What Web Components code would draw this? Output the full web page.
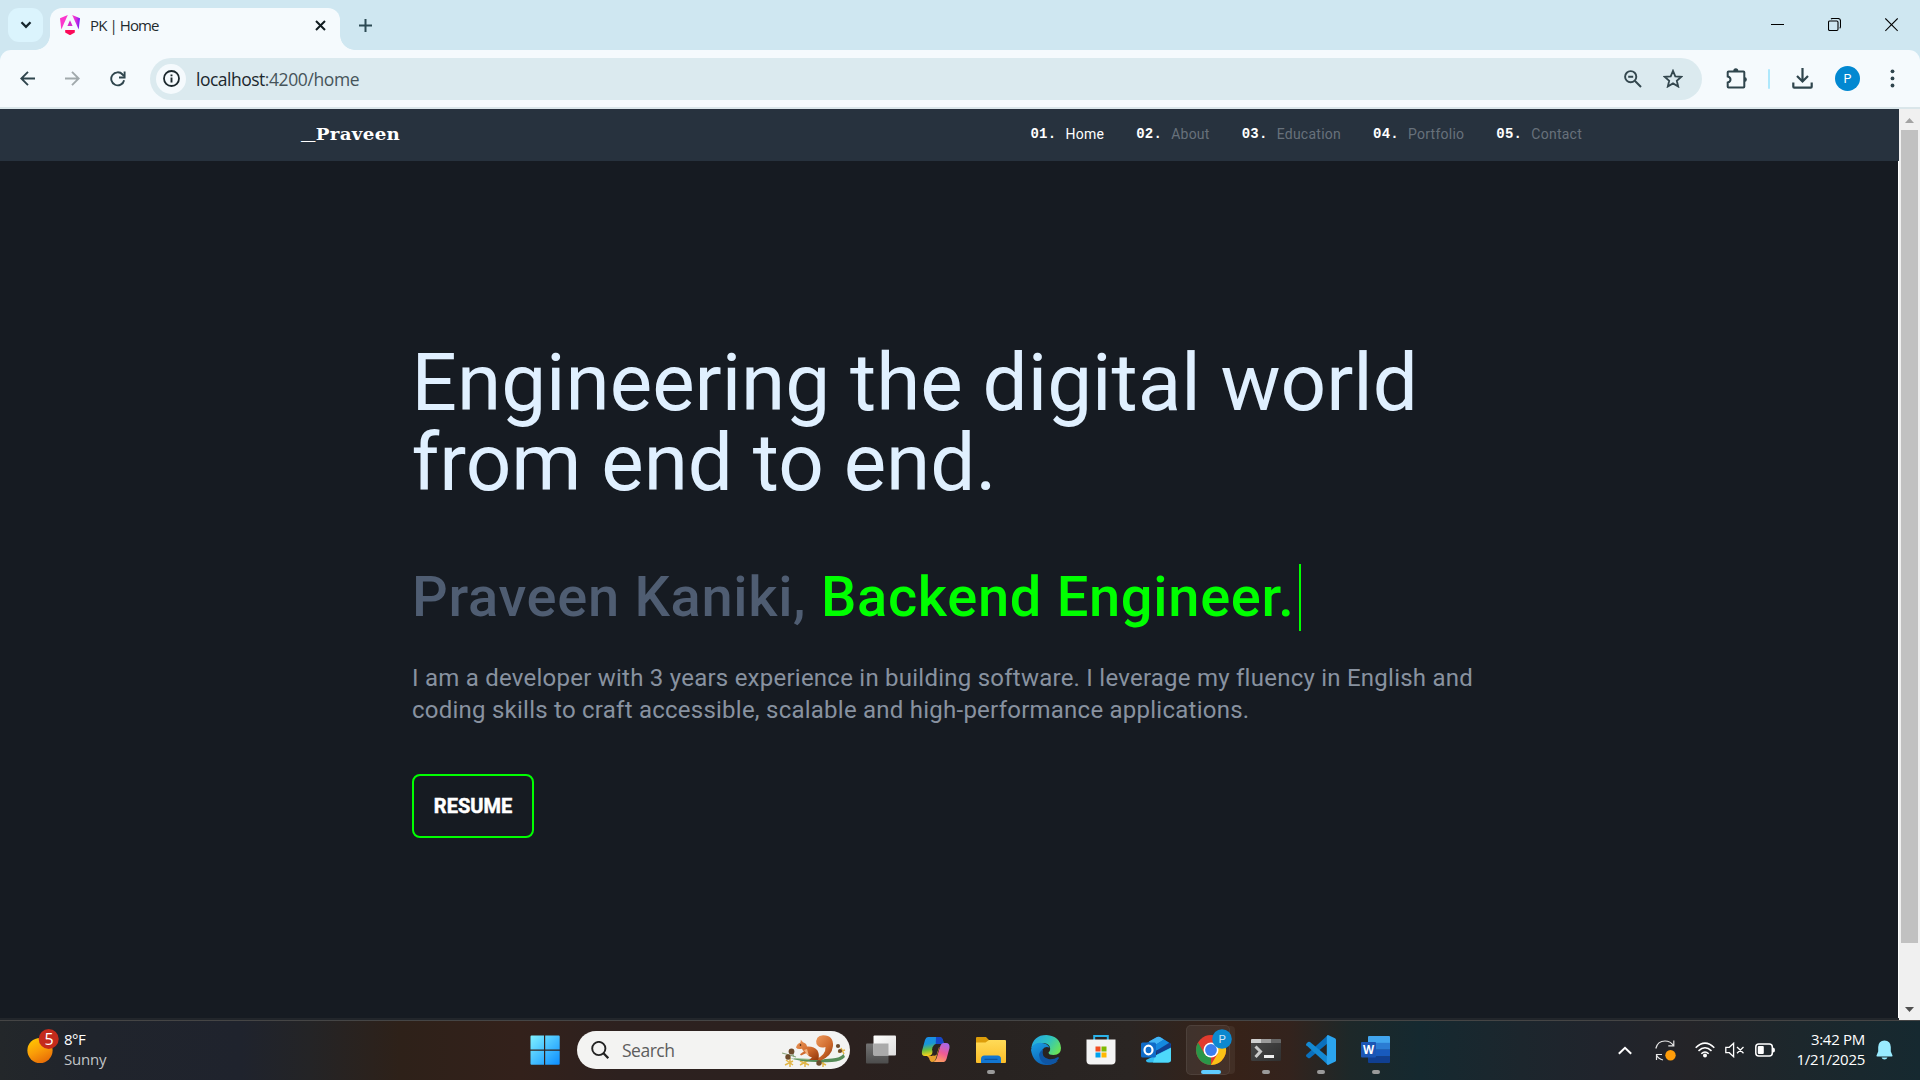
<!DOCTYPE html>
<html lang="en">
<head>
<meta charset="utf-8">
<title>PK | Home</title>
<style>
html,body{margin:0;height:100%;overflow:hidden;background:#161b22}
</style>
</head>
<body>
<desk-top></desk-top>
<script>
const define = (name, html, ready) => {
  const tpl = document.createElement('template');
  tpl.innerHTML = '<style>*{box-sizing:border-box}svg{display:block;flex:none}</style>' + html;
  customElements.define(name, class extends HTMLElement {
    constructor() { super(); this.attachShadow({ mode: 'open' }).append(tpl.content.cloneNode(true)); }
    connectedCallback() { if (ready) ready(this); }
  });
};

/* A single line of text whose tracking is adjusted to fill the given advance width. */
define('fit-text', `<style>:host{display:block;white-space:pre;flex:none}span{display:inline-block}</style><span><slot></slot></span>`, el => {
  const span = el.shadowRoot.querySelector('span');
  const scale = parseFloat(el.getAttribute('scale')) || 1;
  const natural = span.offsetWidth;
  const n = el.textContent.length;
  const target = parseFloat(el.getAttribute('width')) / scale;
  if (natural && n) span.style.letterSpacing = ((target - natural) / n) + 'px';
  if (scale !== 1) { span.style.transformOrigin = '0 50%'; span.style.transform = 'scaleX(' + scale + ')'; }
});

define('tab-strip', `<style>
:host{display:flex;height:50px;background:#cfe7f1;align-items:flex-end;font:15px/20px "Open Sans","Noto Sans",sans-serif;color:#1f2a2e}
.search{width:35px;height:34px;border-radius:11px;background:#dbf4fd;margin:0 0 8px 8px;display:flex;align-items:center;justify-content:center}
.flare{width:15px;height:15px;flex:none}
.l{margin-left:-8px;background:radial-gradient(circle at 0 0,transparent 14.5px,#f5fafd 15.2px)}
.r{background:radial-gradient(circle at 100% 0,transparent 14.5px,#f5fafd 15.2px)}
.tab{width:290px;height:42.5px;border-radius:12px 12px 0 0;background:#f5fafd;display:flex;align-items:center;padding:0 14px 7px 10px}
.tab fit-text{margin-left:10px;flex:1}
.plus{margin:0 0 18px 4px}
.win{margin-left:auto;display:flex;gap:44px;padding:0 22px 18px 0}
</style>
<div class="search"><svg width="12" height="8" viewBox="0 0 12 8"><path d="M1.5 1.3 6 5.8l4.500-4.500" fill="none" stroke="#16262c" stroke-width="2.300"/></svg></div>
<i class="flare l"></i>
<div class="tab">
<svg width="20" height="20" viewBox="0 0 20 20"><defs><linearGradient id="a" x1="0" x2="1" y1="0.400" y2="0.500"><stop offset="0" stop-color="#ff41c6"/><stop offset=".5" stop-color="#d92be0"/><stop offset="1" stop-color="#6d1cf5"/></linearGradient></defs>
<path d="M0 3.200 7.800 0 1.300 14.600z" fill="#fb36cc"/><path d="M12.200 0 20 3.200l-1.300 11.400z" fill="url(#a)"/><path d="M10 5.200 12.600 11H7.400z" fill="#d52acb"/><path d="M5.200 15.100h9.600v2.500L10 20.200l-4.800-2.600z" fill="#fb0a58"/></svg>
<fit-text width="69">PK | Home</fit-text>
<svg width="11" height="11" viewBox="0 0 11 11"><path d="m1 1 9 9m0-9-9 9" stroke="#111c20" stroke-width="2"/></svg>
</div>
<i class="flare r"></i>
<svg class="plus" width="13" height="13" viewBox="0 0 13 13"><path d="M6.500 0v13M0 6.500h13" stroke="#2c4a54" stroke-width="2"/></svg>
<div class="win">
<svg width="13" height="14" viewBox="0 0 13 14"><path d="M0 6.500h13" stroke="#000"/></svg>
<svg width="13" height="14" viewBox="0 0 13 14"><rect x=".5" y="3" width="9.500" height="9.500" rx="1.200" fill="none" stroke="#000" stroke-width="1.100"/><path d="M3 1q.5-.5 1.500-.5h5.500q2.500 0 2.500 2.500v5.500q0 1.200-.8 1.700" fill="none" stroke="#000" stroke-width="1.100"/></svg>
<svg width="13" height="14" viewBox="0 0 13 14"><path d="m.3.500 12.400 12.400m0-12.400L.3 12.900" stroke="#000" stroke-width="1.100"/></svg>
</div>`);

define('tool-bar', `<style>
:host{display:block;background:#cfe7f1}
.bar{height:57px;background:#f5fafd;border-radius:11px 11px 0 0;display:flex;align-items:center;padding-left:20px}
.line{height:2px;background:#dae6ea}
.box{width:1552px;height:42px;border-radius:21px;background:#dbeaef;display:flex;align-items:center;padding:0 19px 0 6px;font:17.500px/24px "Open Sans","Noto Sans",sans-serif;color:#1b282d}
.info{width:30px;height:30px;border-radius:50%;background:#f5fafd;display:flex;align-items:center;justify-content:center;margin-right:10px}
.rest{color:#46545a;flex:1}
.av{width:25px;height:25px;border-radius:50%;background:#0288d1;color:#fff;font:12.500px/25px Roboto,sans-serif;text-align:center}
</style>
<div class="bar">
<svg width="15" height="15" viewBox="0 0 15 15"><path d="M15 7.500H1.500M8 .8 1.300 7.500 8 14.200" fill="none" stroke="#2f454d" stroke-width="1.900"/></svg>
<svg style="margin-left:30px" width="15" height="15" viewBox="0 0 15 15"><path d="M0 7.500h13.500M7 .8l6.700 6.700L7 14.200" fill="none" stroke="#a1a9ac" stroke-width="1.900"/></svg>
<svg style="margin-left:30px" width="16" height="16" viewBox="0 0 16 16"><path d="M14.100 9.200A6.500 6.500 0 1 1 12.600 3.500L14 5" fill="none" stroke="#2f454d" stroke-width="1.900"/><path d="M14.600.5v6H9" fill="none" stroke="#2f454d" stroke-width="1.900"/></svg>
<div class="box" style="margin-left:24px">
<span class="info"><svg width="17" height="17" viewBox="0 0 17 17"><circle cx="8.500" cy="8.500" r="7.500" fill="none" stroke="#1b282d" stroke-width="1.800"/><path d="M8.500 7.500v5M8.500 4.400v1.900" stroke="#1b282d" stroke-width="1.900"/></svg></span>
<fit-text width="68.500">localhost</fit-text><fit-text class="rest" width="94">:4200/home</fit-text>
<svg width="18" height="18" viewBox="0 0 18 18"><circle cx="6.700" cy="6.700" r="5.600" fill="none" stroke="#33474e" stroke-width="1.900"/><path d="m10.800 10.800 6.200 6.200M4.200 6.700h5" stroke="#33474e" stroke-width="2"/></svg>
<svg style="margin-left:21px" width="20" height="19" viewBox="0 0 20 19"><path d="m10 1.800 2.300 5.500 6 .5-4.500 3.900 1.400 5.800L10 14.400l-5.200 3.100 1.400-5.800L1.700 7.800l6-.5z" fill="none" stroke="#33474e" stroke-width="1.800"/></svg>
</div>
<svg style="margin-left:24px" width="22" height="22" viewBox="0 0 22 22"><path d="M2.500 3.500h15q.8 0 .8.800v14.400q0 .8-.8.800h-15q-.8 0-.8-.8v-4.200q2.800-.7 2.800-3t-2.800-3V4.300q0-.8.800-.8z" fill="none" stroke="#2f454d" stroke-width="2"/><path d="M7.300 3a2.500 2.700 0 0 1 5 0zM18.500 9a2.400 2.500 0 0 1 0 5z" fill="#2f454d"/></svg>
<svg style="margin-left:20px" width="2" height="20" viewBox="0 0 2 20"><rect width="2" height="20" rx="1" fill="#aee8fc"/></svg>
<svg style="margin-left:22px" width="21" height="21" viewBox="0 0 21 21"><path d="M10.500 0v13M5 8l5.500 5.500L16 8M1.300 14.500v4.200q0 .9.900.9h16.600q.9 0 .9-.9v-4.200" fill="none" stroke="#2f454d" stroke-width="2.200"/></svg>
<span class="av" style="margin-left:22px">P</span>
<svg style="margin-left:30px" width="5" height="19" viewBox="0 0 5 19"><g fill="#2f454d"><circle cx="2.500" cy="2.300" r="1.900"/><circle cx="2.500" cy="9.400" r="1.900"/><circle cx="2.500" cy="16.500" r="1.900"/></g></svg>
</div>
<div class="line"></div>`);

define('nav-item', `<style>
:host{display:flex;font:14px/20px Roboto,sans-serif;color:#67717b;letter-spacing:.25px}
:host([active]){color:#fff}
b{width:35px;color:#fff;font:bold 14px/20px "Liberation Mono",monospace}
</style><b></b><slot></slot>`, el => { el.shadowRoot.querySelector('b').textContent = el.getAttribute('no'); });

define('site-nav', `<style>
:host{display:flex;height:52px;background:#27323e;align-items:center;padding:0 317px 0 301px}
.logo{font:bold 16px/24px "DejaVu Serif",serif;color:#fff;flex:1}
.logo span{font:bold 21px/20px "Liberation Mono",monospace}
nav{display:flex;gap:32px;padding-bottom:2px}
</style>
<fit-text class="logo" width="99.500" scale="1.140"><span>_</span>Praveen</fit-text>
<nav><nav-item no="01." active>Home</nav-item><nav-item no="02.">About</nav-item><nav-item no="03.">Education</nav-item><nav-item no="04.">Portfolio</nav-item><nav-item no="05.">Contact</nav-item></nav>`);

define('hero-banner', `<style>
:host{display:block;flex:1;background:#161b22;border-right:1px solid #fff;padding:182px 0 0 412px;font-family:Roboto,sans-serif}
h1{margin:0 0 0 -.5px;font-size:80px;line-height:80px;font-weight:400;color:#e0f0ff}
h2{margin:61px 0 0;font-size:56px;line-height:67px;font-weight:500;color:#4f5d72;display:flex;white-space:pre;letter-spacing:.7px}
h2 b{font-weight:500;color:#0f0;border-right:2px solid #0f0;padding-right:5px}
p{margin:31px 0 48px;font-size:24px;line-height:32px;color:#8892a0;letter-spacing:.24px}
a{display:flex;width:122px;height:64px;border:2px solid #0f0;border-radius:8px;align-items:center;justify-content:center;color:#fff;font-size:20px;font-weight:700;-webkit-text-stroke:.5px #fff}
</style>
<h1>Engineering the digital world<br>from end to end.</h1>
<h2>Praveen Kaniki, <b>Backend Engineer.</b></h2>
<p>I am a developer with 3 years experience in building software. I leverage my fluency in English and<br>coding skills to craft accessible, scalable and high-performance applications.</p>
<a><fit-text width="78">RESUME</fit-text></a>`);

define('scroll-bar', `<style>
:host{display:flex;flex-direction:column;width:21px;height:911px;background:#f0f0f0;align-items:center}
.thumb{width:17px;height:813px;background:#c1c1c1;margin-top:7px}
.up{margin-top:9px}.down{margin-top:auto;margin-bottom:8px}
</style>
<svg class="up" width="9" height="5" viewBox="0 0 9 5"><path d="M0 5 4.500 0 9 5z" fill="#a3a3a3"/></svg>
<div class="thumb"></div>
<svg class="down" width="9" height="5" viewBox="0 0 9 5"><path d="m0 0 4.500 5L9 0z" fill="#505050"/></svg>`);

define('web-page', `<style>
:host{display:flex;height:911px;background:#22262b}
main{width:1899px;height:909px;display:flex;flex-direction:column}
</style><main><site-nav></site-nav><hero-banner></hero-banner></main><scroll-bar></scroll-bar>`);

define('task-icon', `<style>
:host{display:flex;flex-direction:column;align-items:center;width:55px;height:50px;padding-top:10px;flex:none}
::slotted(svg){display:block;width:30px;height:30px;overflow:visible}
i{width:8px;height:4px;border-radius:2px;background:#9a9a9a;margin-top:5px;display:none}
:host([open]) i{display:block}
:host([current]) i{display:block;width:20px;background:#60cdff;margin-top:-5px}
:host([current]) .w{margin:-10px 6px 0 0;padding:10px 4px 0 10px;height:50px;border-radius:5px;background:rgba(255,255,255,.07);box-shadow:0 0 0 1px rgba(255,255,255,.07) inset,6px 0 0 -1px rgba(255,255,255,.06);flex:none}
</style><div class="w"><slot></slot></div><i></i>`);

define('task-bar', `<style>
:host{display:flex;height:60px;border-top:1px solid #454545;align-items:center;font:15px/20px "Open Sans","Noto Sans",sans-serif;color:#fff;padding-bottom:1px;
background:linear-gradient(90deg,#23272a 0,#20242c 90px,#1f232d 240px,#242426 310px,#2e2119 400px,#33211b 520px,#2d211f 620px,#2b211f 850px,#282321 1000px,#2a2523 1130px,#372218 1230px,#33231d 1290px,#1d2829 1350px,#152930 1420px,#1c262d 1520px,#20242c 1600px,#242428 1690px,#1c272c 1800px,#162930 1920px)}
.weather{display:flex;width:517px;padding-left:27px;flex:none}
.weather svg{margin-right:5px;overflow:visible}
.weather svg text{font:16px/16px "Open Sans",sans-serif}
.weather div{margin-top:-1px}
.sub{color:#c3c5c8}
.pill{width:273px;height:38px;border-radius:19px;background:#f3f3f2;display:flex;align-items:center;padding-left:14px;margin:0 3px 0 5px;font-size:17.500px;line-height:24px;color:#5d5d5d;flex:none}
.pill fit-text{margin-left:13px;flex:1}
.tray{display:flex;align-items:center;margin-left:auto;padding-right:27px}
.clock{display:flex;flex-direction:column;align-items:flex-end;margin:-2px 11px 0 20px}
</style>
<div class="weather">
<svg width="32" height="40" viewBox="0 0 32 40"><defs><linearGradient id="s" x1=".2" y1="0" x2=".7" y2="1"><stop stop-color="#ffc800"/><stop offset=".5" stop-color="#fa9d08"/><stop offset="1" stop-color="#e66a07"/></linearGradient></defs><circle cx="13" cy="20.500" r="12.600" fill="url(#s)"/><circle cx="21.700" cy="9" r="10" fill="#c42b1c"/><text x="17.400" y="14.500" fill="#fff">5</text></svg>
<div><fit-text width="21.500">8°F</fit-text><fit-text class="sub" width="42">Sunny</fit-text></div></div>
<task-icon><svg viewBox="0 0 30 30"><defs><linearGradient id="w" gradientUnits="userSpaceOnUse" x1="0" y1="0" x2="30" y2="30"><stop stop-color="#82f3ff"/><stop offset="1" stop-color="#0a8cff"/></linearGradient></defs><path d="M1.500.5H14v14H.5v-13q0-1 1-1zM15.200.5h13.500q1 0 1 1v13H15.200zM.5 15.700H14v14H1.500q-1 0-1-1zM15.200 15.700h14.500v13q0 1-1 1H15.200z" fill="url(#w)"/></svg></task-icon>
<div class="pill"><svg width="18" height="18" viewBox="0 0 18 18"><circle cx="7.800" cy="7.500" r="6.600" fill="none" stroke="#222" stroke-width="1.900"/><path d="m12.500 12.200 4.800 4.900" stroke="#222" stroke-width="2.300"/></svg><fit-text width="52">Search</fit-text>
<svg width="68" height="36" viewBox="0 0 68 36"><defs><linearGradient id="q" x2=".8" y2="1"><stop stop-color="#ee9a5c"/><stop offset=".6" stop-color="#cf6a2d"/><stop offset="1" stop-color="#9c3f10"/></linearGradient></defs>
<g stroke="#e2b648" stroke-width="1.500" fill="none"><path d="M8 26v9M4 28l7 5M3 33l8-4M23 27v8M18 29l9 4M18 33l9-5M41 28v7M38 30l6 3M59 16l3 6M56 20l7-2"/></g>
<path d="M0 21q8 2 14 4M10 20l2 5" fill="none" stroke="#8aa37a" stroke-width="1.200"/>
<path d="M8 26.500q10 .5 20 .8t22-.8q8-.5 11.500-4.500l1.500 3q-4 4.500-13 5-12 .5-22-.2T8 26.500z" fill="#568c58"/><path d="M12 26.500q14 1.200 30 .7" stroke="#9cc190" fill="none"/>
<path d="M34 27q10-4 9.500-12-6 2-9-3Q33 4 41 3.200 51.500 3 51 14q-1 10-13 15z" fill="url(#q)"/>
<path d="M14 15.500q1-4 4.500-5l.3-2.700 2.200 2.500q3.500 1 4 4.200 7-.5 10.500 4 2.500 5 .5 9.500H27l3-2.500q-4-1-5.500-4.500l-5.500 2.500-1-1.300 4-3q-1.500-.8-2-2.500-4.500 1-6-1.200z" fill="url(#q)"/><path d="M22 18q2 4 5 6l-2-7z" fill="#f2b27e"/><circle cx="18.500" cy="13" r=".8" fill="#20120a"/>
<g fill="#6c4a2c"><circle cx="9.500" cy="19.500" r="2.900"/><circle cx="6" cy="25" r="2.700"/><circle cx="56" cy="14" r="2.100"/><circle cx="58" cy="19" r="2.100"/><circle cx="37" cy="31" r="2.700"/></g></svg></div>
<task-icon><svg viewBox="0 0 30 30"><defs><linearGradient id="t" x2="1" y2="1"><stop stop-color="#fff"/><stop offset="1" stop-color="#ddd"/></linearGradient><linearGradient id="t2" y1="0" y2="1" x2="0"><stop stop-color="#737373"/><stop offset="1" stop-color="#4c4c4c"/></linearGradient></defs><rect y="8.500" width="22.500" height="20" rx="1" fill="url(#t2)"/><rect x="7.500" y=".5" width="22.500" height="20" rx="1" fill="url(#t)"/><path d="M7.500 8.500h15v12h-15z" fill="#aaa"/></svg></task-icon>
<task-icon><svg viewBox="0 0 30 30"><defs><linearGradient id="c1" x2=".2" y2="1"><stop stop-color="#1a8ce8"/><stop offset=".4" stop-color="#1896d8"/><stop offset=".7" stop-color="#6bbf3e"/><stop offset="1" stop-color="#ffd21a"/></linearGradient><linearGradient id="c2" x1=".7" x2=".3" y2="1"><stop stop-color="#a867e8"/><stop offset=".5" stop-color="#ef5a94"/><stop offset="1" stop-color="#ffa35b"/></linearGradient></defs>
<path d="M7 2h11q3 0 4 4l1 3h-6q-3 0-4 4l-2 6q-1 2-4 2H4q-4 0-3-5L4 5q1-3 3-3z" fill="url(#c1)"/><path d="M15 2h4q2.500 0 3.300 4l.9 3h-6q-1.500 0-2.500.8z" fill="#1746c9"/><path d="M23 27H12q3-1 4-5l3-10q1-4 4-4h2q4 0 3.500 5l-3 11q-1 3-2.500 3z" fill="url(#c2)"/><path d="M6 21h5q2-1 2.500-3l2-6 3 0-3.500 11q-1 4-4 4-2 0-3-4z" fill="#e8a12d"/><path d="M11 14.500q1-5 4-5.500h4l-3.500 11-3 1z" fill="#2a2421"/></svg></task-icon>
<task-icon open><svg viewBox="0 0 30 30"><defs><linearGradient id="e" x2="0" y2="1"><stop stop-color="#ffdb58"/><stop offset="1" stop-color="#fbbd28"/></linearGradient></defs><path d="M0 3q0-1 1-1h9l3 3h13v6H0z" fill="#dd9d0a"/><path d="M0 9.500V7.500h9.500l3.500-2.500H29q1 0 1 1V27q0 1-1 1H1q-1 0-1-1z" fill="url(#e)"/><path d="M5 28v-4q0-3.500 3.500-3.500h13q3.500 0 3.500 3.500v4z" fill="#1276d1"/><path d="M8.500 24.300h13" stroke="#0b4d94"/></svg></task-icon>
<task-icon><svg viewBox="0 0 30 30"><defs><linearGradient id="g1" y1=".2" x2="1" y2=".7"><stop stop-color="#23a6e3"/><stop offset=".5" stop-color="#2fc3c0"/><stop offset="1" stop-color="#6be455"/></linearGradient><linearGradient id="g2" x2=".5" y2="1"><stop stop-color="#1aa0e4"/><stop offset="1" stop-color="#0c60b4"/></linearGradient></defs>
<path d="M.2 13.500Q2 0 15.500 0 29 1 30 13q0 7-7.500 7-5 0-5-2.500 1.700-1 1.700-3.500 0-5-6.200-6Q4 7.500.2 13.500z" fill="url(#g1)"/><path d="M0 15Q1 8 9 7.700q8 .3 9.500 5-4-2-7 1.800-1.500 5 2 9.500 5 5 13.500 2-4.700 4-11 4Q2 29.500 0 15z" fill="url(#g2)"/><path d="M12 14.500q-2 8 5.500 9.500 5 .8 9.500-2 1.300 0 .8 1.500-3 4.500-8 6Q9 30 8 20q.5-4 4-5.500z" fill="#0e55a4"/></svg></task-icon>
<task-icon><svg viewBox="0 0 30 30"><path d="M8.200 6V1h13.600v5" fill="none" stroke="#2bb3ea" stroke-width="2"/><path d="M.5 4.500h29v21q0 4-4 4h-21q-4 0-4-4z" fill="#f4f4f4"/><path d="M9.500 11.500h5v5h-5z" fill="#f04e23"/><path d="M15.500 11.500h5v5h-5z" fill="#7fb900"/><path d="M9.500 17.500h5v5h-5z" fill="#00a3ee"/><path d="M15.500 17.500h5v5h-5z" fill="#ffb801"/></svg></task-icon>
<task-icon><svg viewBox="0 0 30 30"><path d="M4 9 16 2q1.500-.6 3 0L30 9v6H4z" fill="#1268c3"/><path d="M8 6.500 16 2q1.500-.6 3 0l4 2.500L11 12z" fill="#42b5f5"/><path d="M12 11.500 23 4.500l5 3.200L15 16z" fill="#1489e0"/><path d="m15 16 14-8.500 1 2.500v4L16 21z" fill="#103f91"/><path d="M5 25 30 12.500v12q0 3-3 3H8q-3 0-3-2.500z" fill="#33bdf2"/><path d="m14 21 16-8v11.500q0 3-3 3H12z" fill="#4ed8fa"/><rect y="7.500" width="15" height="15" rx="1.500" fill="#0f6cc9"/><ellipse cx="7.500" cy="15" rx="4" ry="4.300" fill="none" stroke="#fff" stroke-width="2.200"/></svg></task-icon>
<task-icon current><svg viewBox="0 0 30 30"><circle cx="15" cy="15" r="15" fill="#e23b2e"/><path d="M2 7.500 8.500 18.700 15 22.500 14.900 30A15 15 0 0 1 2 7.500z" fill="#2a9648"/><path d="M28 7.500A15 15 0 0 1 14.900 30l6.600-11.300Q23.500 12 18 7.500z" fill="#fbc116"/><circle cx="15" cy="15" r="7.500" fill="#fff"/><circle cx="15" cy="15" r="5.900" fill="#3b7eee"/><circle cx="26" cy="4" r="9.800" fill="#0c88cf"/><text x="22.600" y="8.300" font-family="Roboto,sans-serif" font-size="11.500" fill="#cfe6f5">P</text></svg></task-icon>
<task-icon open><svg viewBox="0 0 30 30"><defs><linearGradient id="m" x2="1" y2="1"><stop stop-color="#4b4b4b"/><stop offset="1" stop-color="#303030"/></linearGradient></defs><rect y="4" width="30" height="22" rx="1.500" fill="url(#m)"/><path d="M0 8V5q0-1 1-1h9v4z" fill="#d0d0d0"/><path d="M10 4h10v4H10z" fill="#9b9b9b"/><path d="M20 4h9q1 0 1 1v3H20z" fill="#666"/><path d="m4.500 11.500 5 5-5 5.500" fill="none" stroke="#c9c9c9" stroke-width="3"/><path d="M13 21.500h10" stroke="#eee" stroke-width="3"/></svg></task-icon>
<task-icon open><svg viewBox="0 0 30 30"><path d="M22 0v8L4 23q-1 .5-2 0l-1.700-1.700q-.6-.8 0-1.500z" fill="#0a70bd"/><path d="M22 30v-8L4 7q-1-.5-2 0L.3 8.700q-.6.800 0 1.500z" fill="#1489d3"/><path d="m22 0 7 3.300q1 .5 1 1.500v20.400q0 1-1 1.500L22 30q-1.200-.3-1.200-1.500V1.500Q20.800.3 22 0z" fill="#2ba4ee"/></svg></task-icon>
<task-icon open><svg viewBox="0 0 30 30"><path d="M7 2q0-1 1-1h20q1 0 1 1v6H7z" fill="#41a5ee"/><path d="M7 7.800h22v7H7z" fill="#2b7cd3"/><path d="M7 14.600h22v7H7z" fill="#185abd"/><path d="M7 21.400h22V27q0 1-1 1H8q-1 0-1-1z" fill="#103f91"/><rect y="7" width="15" height="15.500" rx="1" fill="#1b56b5"/><text x="2" y="19" font-family="Open Sans,sans-serif" font-weight="700" font-size="11.500" fill="#fff">W</text></svg></task-icon>
<div class="tray">
<svg width="14" height="9" viewBox="0 0 14 9"><path d="m.8 7.800 6.200-6 6.200 6" fill="none" stroke="#fff" stroke-width="2"/></svg>
<svg style="margin-left:23px" width="21" height="21" viewBox="0 0 21 21"><path d="M.8 8.500Q2.500 1 10 1q5.500 0 8.500 4.500M18.800.5v5.300h-5.500M1.500 20v-5.500H7M1.500 15q2 4 6.500 5" fill="none" stroke="#e6e6e6" stroke-width="1.200"/><circle cx="15.500" cy="15.300" r="5.200" fill="#ff9d0a"/></svg>
<svg style="margin-left:19px" width="20" height="16" viewBox="0 0 20 16"><g fill="none" stroke="#fff" stroke-width="1.500"><path d="M.7 5.800q9.300-9.300 18.600 0M3.500 8.900q6.500-6.500 13 0M6.300 11.800q3.700-3.700 7.400 0"/></g><circle cx="10" cy="13.600" r="2" fill="#fff"/></svg>
<svg style="margin-left:10px" width="20" height="16" viewBox="0 0 20 16"><path d="M.8 5.300h3.500l4.300-4v13.400l-4.300-4H.8zM12 5l6.500 6.300M18.500 5 12 11.300" fill="none" stroke="#fff" stroke-width="1.300"/></svg>
<svg style="margin-left:10px" width="21" height="14" viewBox="0 0 21 14"><rect x=".8" y="1" width="16.500" height="12" rx="3" fill="none" stroke="#fff" stroke-width="1.500"/><rect x="2.800" y="3" width="6" height="8" rx="1" fill="#fff"/><path d="M18 4.500q2 0 2 2.500t-2 2.500z" fill="#fff"/></svg>
<div class="clock"><fit-text width="54">3:42 PM</fit-text><fit-text width="68.500">1/21/2025</fit-text></div>
<svg width="17" height="20" viewBox="0 0 17 20"><path d="M8.500.5q6 0 6.300 6.500v4.500l1.700 4q.3 1-.8 1H1.300q-1.100 0-.8-1l1.700-4V7Q2.500.5 8.500.5zM5.500 17.500h6q-.8 2-3 2t-3-2z" fill="#99ebff"/></svg>
</div>`);

define('desk-top', `<style>:host{display:flex;flex-direction:column;width:1920px;height:1080px}</style>
<tab-strip></tab-strip><tool-bar></tool-bar><web-page></web-page><task-bar></task-bar>`);
</script>
</body>
</html>
